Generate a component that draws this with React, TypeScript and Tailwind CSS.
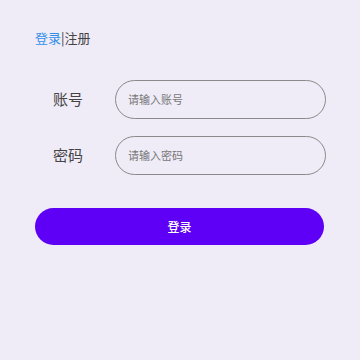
import React from 'react'

const font = { fontFamily: '"Noto Sans CJK SC", "Noto Sans", sans-serif' }

function Field({ label, hint, top }: { label: string; hint: string; top: string }) {
  return (
    <div className={`flex items-center ${top}`}>
      <div className="w-[80px] pl-[18px] text-[15px] text-[#444]">{label}</div>
      <div className="flex h-[39px] w-[211px] items-center rounded-full border border-[#8a8a8a] pl-[12px]">
        <span className="text-[11px] text-[#777]">{hint}</span>
      </div>
    </div>
  )
}

export default function App() {
  return (
    <div className="h-[360px] w-[360px] bg-[#efebf7] pl-[35px]" style={font}>
      <div className="pt-[28px] text-[13px] leading-[20px]">
        <span className="text-[#2f8fe8]">登录</span>
        <span className="text-[#444]">|注册</span>
      </div>
      <Field label="账号" hint="请输入账号" top="mt-[32px]" />
      <Field label="密码" hint="请输入密码" top="mt-[17px]" />
      <button className="mt-[33px] flex h-[37px] w-[289px] items-center justify-center rounded-full bg-[#5d00f5] text-[12px] font-medium text-white">
        登录
      </button>
    </div>
  )
}
